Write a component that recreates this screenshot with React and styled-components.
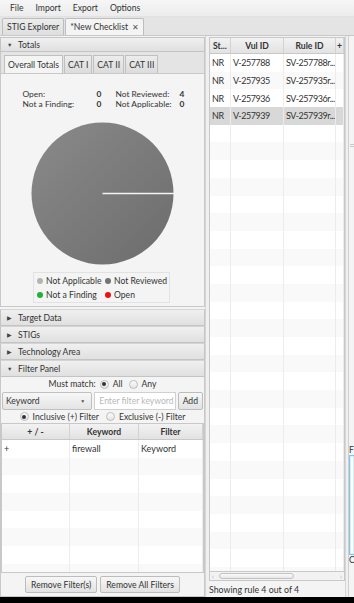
import React from 'react';
import styled, { createGlobalStyle } from 'styled-components';

const Global = createGlobalStyle`
  html, body { margin: 0; padding: 0; background: #000; }
  body {
    font-family: Lato, "Noto Sans", sans-serif;
    font-size: 8.4px;
    color: #333;
  }
  * { box-sizing: border-box; }
`;

const Window = styled.div`
  width: 354px;
  height: 597px;
  background: #f4f4f4;
  display: flex;
  flex-direction: column;
  overflow: hidden;
`;

const MenuBar = styled.div`
  height: 17px;
  display: flex;
  align-items: center;
  gap: 12px;
  padding-left: 10px;
  background: linear-gradient(#f6f6f6, #ececec);
  border-bottom: 1px solid #e2e2e2;
  font-size: 8.6px;
`;

const MenuItem = styled.span`
  color: #333;
`;

const TabBar = styled.div`
  height: 19px;
  display: flex;
  align-items: flex-end;
  padding-left: 2px;
  gap: 1px;
  background: #e4e4e4;
  border-bottom: 1px solid #c8c8c8;
`;

const DocTab = styled.div`
  height: 17px;
  padding: 0 4px;
  display: flex;
  align-items: center;
  gap: 4px;
  border: 1px solid #bdbdbd;
  border-bottom: none;
  border-radius: 2px 2px 0 0;
  background: ${p => (p.$active ? '#f4f4f4' : 'linear-gradient(#ececec, #dedede)')};
  font-size: 8.6px;
`;

const Close = styled.span`
  font-size: 7.5px;
  color: #555;
`;

const Body = styled.div`
  flex: 1;
  display: flex;
  min-height: 0;
`;

const LeftPane = styled.div`
  width: 205px;
  display: flex;
  flex-direction: column;
  padding-top: 1px;
`;

const Divider = styled.div`
  width: ${p => p.$w || 4}px;
  background: #f0f0f0;
  border-left: 1px solid #d6d6d6;
`;

const PaneHeader = styled.div`
  height: ${p => p.$h || 17}px;
  flex: none;
  display: flex;
  align-items: center;
  gap: 5px;
  padding-left: 6px;
  background: linear-gradient(#f0f0f0, #e0e0e0);
  border: 1px solid #c4c4c4;
  border-top-color: ${p => (p.$h ? '#c4c4c4' : '#d4d4d4')};
  color: #333;
  font-size: 8.6px;
`;

const Arrow = styled.span`
  font-size: 5.5px;
  color: #444;
  width: 6px;
`;

const TotalsBody = styled.div`
  height: 255px;
  flex: none;
  border: 1px solid #c8c8c8;
  border-top: none;
  display: flex;
  flex-direction: column;
  margin-bottom: 2px;
`;

const SubTabBar = styled.div`
  height: 22px;
  display: flex;
  align-items: flex-end;
  gap: 1px;
  padding-left: 3px;
  background: #e4e4e4;
  border-bottom: 1px solid #c8c8c8;
`;

const SubTab = styled.div`
  height: 18px;
  padding: 0 3px;
  display: flex;
  align-items: center;
  border: 1px solid #c0c0c0;
  border-bottom: none;
  background: ${p => (p.$active ? '#f4f4f4' : 'linear-gradient(#ececec, #dcdcdc)')};
  font-size: 8.6px;
`;

const TotalsContent = styled.div`
  flex: 1;
  display: flex;
  flex-direction: column;
  align-items: center;
  padding-top: 15px;
`;

const Stats = styled.div`
  display: grid;
  grid-template-columns: 74px 4px 15px 64px 3px;
  line-height: 10px;
  white-space: nowrap;
`;

const StatLabel = styled.span``;
const StatValue = styled.span`
  font-weight: bold;
  text-align: right;
`;

const Pie = styled.svg`
  margin-top: 13px;
  display: block;
`;

const Legend = styled.div`
  margin-top: 7px;
  margin-left: -2px;
  width: 137px;
  height: 31px;
  border: 1px solid #e2e2e2;
  display: grid;
  grid-template-columns: 68px 66px;
  align-content: center;
  row-gap: 4px;
  padding-left: 3px;
  font-size: 8.6px;
`;

const LegendItem = styled.div`
  display: flex;
  align-items: center;
  gap: 3px;
  white-space: nowrap;
  line-height: 10px;
`;

const Dot = styled.span`
  width: 6px;
  height: 6px;
  border-radius: 50%;
  background: ${p => p.$c};
  flex: none;
`;

const FilterBody = styled.div`
  flex: 1;
  display: flex;
  flex-direction: column;
  border: 1px solid #c8c8c8;
  border-top: none;
  min-height: 0;
  font-size: 8.6px;
`;

const RadioRow = styled.div`
  height: ${p => p.$h || 12}px;
  flex: none;
  display: flex;
  align-items: center;
  justify-content: center;
  gap: 4px;
  white-space: nowrap;
`;

const Radio = styled.span`
  width: 9px;
  height: 9px;
  border-radius: 50%;
  border: 1px solid #bcbcbc;
  background: linear-gradient(#fbfbfb, #e6e6e6);
  display: inline-flex;
  align-items: center;
  justify-content: center;
  margin-left: ${p => p.$gap || 0}px;
  &::after {
    content: '';
    width: 4px;
    height: 4px;
    border-radius: 50%;
    background: ${p => (p.$on ? '#333' : 'transparent')};
  }
`;

const InputRow = styled.div`
  height: 18px;
  flex: none;
  margin-top: 1px;
  display: flex;
  gap: 2px;
  padding: 0 1px;
`;

const Combo = styled.div`
  width: 91px;
  border: 1px solid #c0c0c0;
  border-radius: 2px;
  background: linear-gradient(#f7f7f7, #e4e4e4);
  display: flex;
  align-items: center;
  justify-content: space-between;
  padding: 0 6px 0 3px;
`;

const Caret = styled.span`
  font-size: 5px;
  color: #555;
`;

const TextInput = styled.div`
  width: 82px;
  border: 1px solid #d0d0d0;
  background: #fff;
  color: #b8b8b8;
  display: flex;
  align-items: center;
  padding-left: 4px;
  white-space: nowrap;
  overflow: hidden;
`;

const Button = styled.div`
  height: ${p => p.$h || 17}px;
  padding: 0 ${p => p.$px || 5}px;
  flex: ${p => (p.$grow ? 1 : 'none')};
  border: 1px solid #bcbcbc;
  border-radius: 2px;
  background: linear-gradient(#f7f7f7, #e2e2e2);
  display: flex;
  align-items: center;
  justify-content: center;
  white-space: nowrap;
  color: #333;
`;

const Table = styled.div`
  flex: 1;
  display: flex;
  flex-direction: column;
  overflow: hidden;
  background: #fff;
  border: 1px solid #c8c8c8;
  min-height: 0;
`;

const HeadRow = styled.div`
  height: 16px;
  flex: none;
  display: grid;
  grid-template-columns: ${p => p.$cols};
  background: linear-gradient(#f2f2f2, #e2e2e2);
  border-bottom: 1px solid #c8c8c8;
  font-weight: bold;
  color: #333;
  font-size: 8.6px;
`;

const HeadCell = styled.div`
  display: flex;
  align-items: center;
  justify-content: center;
  padding: 0 2px;
  border-right: 1px solid #d2d2d2;
  white-space: nowrap;
  overflow: hidden;
`;

const Row = styled.div`
  height: 17.7px;
  flex: none;
  display: grid;
  grid-template-columns: ${p => p.$cols};
  background: ${p => (p.$sel ? '#d8d8d8' : p.$odd ? '#f9f9f9' : '#fff')};
  font-size: ${p => p.$fs || 9}px;
  letter-spacing: ${p => p.$ls || 0}px;
  color: #333;
`;

const Cell = styled.div`
  display: flex;
  align-items: center;
  padding-left: 2px;
  border-right: 1px solid #ececec;
  white-space: nowrap;
  overflow: hidden;
`;

const ButtonBar = styled.div`
  height: 23px;
  flex: none;
  display: flex;
  align-items: center;
  justify-content: center;
  gap: 3px;
`;

const RightPane = styled.div`
  width: 136px;
  display: flex;
  flex-direction: column;
  padding-top: 1px;
`;

const HScroll = styled.div`
  height: 9px;
  flex: none;
  display: flex;
  align-items: center;
  gap: 2px;
  padding: 0 2px;
  background: #f2f2f2;
  border: 1px solid #c8c8c8;
  border-top: none;
  color: #aaa;
  font-size: 7px;
`;

const Thumb = styled.div`
  width: 75px;
  height: 6px;
  margin-left: 3px;
  border: 1px solid #c2c2c2;
  border-radius: 3px;
  background: linear-gradient(#fafafa, #e8e8e8);
`;

const Spacer = styled.div`
  flex: 1;
`;

const Status = styled.div`
  height: 16px;
  flex: none;
  display: flex;
  align-items: center;
  white-space: nowrap;
  font-size: 8.8px;
`;

const SidePane = styled.div`
  flex: 1;
  display: flex;
  flex-direction: column;
  overflow: hidden;
  position: relative;
  border-left: 1px solid #d0d0d0;
  padding-top: 409px;
`;

const Grip = styled.div`
  position: absolute;
  top: 108px;
  left: 1px;
  width: 4px;
  height: 3px;
  border-top: 1px solid #c8c8c8;
  border-bottom: 1px solid #c8c8c8;
`;

const SideLabel = styled.div`
  height: 10px;
  line-height: 10px;
  white-space: nowrap;
  font-size: 8.6px;
`;

const SideArea = styled.div`
  height: 100px;
  border: 1px solid #7ec7e8;
  border-right: none;
  background: #fff;
  box-shadow: inset 0 0 0 1px #d6eef8;
`;

const filterCols = '68px 69px 1fr';
const ruleCols = '21px 53px 52px 1fr';

const rules = [
  ['NR', 'V-257788', 'SV-257788r...'],
  ['NR', 'V-257935', 'SV-257935r...'],
  ['NR', 'V-257936', 'SV-257936r...'],
  ['NR', 'V-257939', 'SV-257939r...'],
];

function PieChart() {
  return (
    <Pie width="143" height="143" viewBox="0 0 143 143">
      <defs>
        <linearGradient id="pg" x1="0" y1="0" x2="1" y2="1">
          <stop offset="0" stopColor="#8a8a8a" />
          <stop offset="1" stopColor="#6c6c6c" />
        </linearGradient>
      </defs>
      <circle cx="71.5" cy="71.5" r="71" fill="url(#pg)" />
      <line x1="71.5" y1="71.5" x2="143" y2="71.5" stroke="#f4f4f4" strokeWidth="1.5" />
    </Pie>
  );
}

export default function App() {
  const ruleRows = Array.from({ length: 30 }, (_, i) => rules[i] || ['', '', '']);
  const filterRows = Array.from({ length: 8 }, (_, i) => (i === 0 ? ['+', 'firewall', 'Keyword'] : ['', '', '']));

  return (
    <>
      <Global />
      <Window>
        <MenuBar>
          <MenuItem>File</MenuItem>
          <MenuItem>Import</MenuItem>
          <MenuItem>Export</MenuItem>
          <MenuItem>Options</MenuItem>
        </MenuBar>
        <TabBar>
          <DocTab>STIG Explorer</DocTab>
          <DocTab $active>*New Checklist <Close>✕</Close></DocTab>
        </TabBar>
        <Body>
          <LeftPane>
            <PaneHeader $h={15}><Arrow>▼</Arrow>Totals</PaneHeader>
            <TotalsBody>
              <SubTabBar>
                <SubTab $active>Overall Totals</SubTab>
                <SubTab>CAT I</SubTab>
                <SubTab>CAT II</SubTab>
                <SubTab>CAT III</SubTab>
              </SubTabBar>
              <TotalsContent>
                <Stats>
                  <StatLabel>Open:</StatLabel><StatValue>0</StatValue><span />
                  <StatLabel>Not Reviewed:</StatLabel><StatValue>4</StatValue>
                  <StatLabel>Not a Finding:</StatLabel><StatValue>0</StatValue><span />
                  <StatLabel>Not Applicable:</StatLabel><StatValue>0</StatValue>
                </Stats>
                <PieChart />
                <Legend>
                  <LegendItem><Dot $c="#b4b4b4" />Not Applicable</LegendItem>
                  <LegendItem><Dot $c="#737373" />Not Reviewed</LegendItem>
                  <LegendItem><Dot $c="#1fb33a" />Not a Finding</LegendItem>
                  <LegendItem><Dot $c="#ee1111" />Open</LegendItem>
                </Legend>
              </TotalsContent>
            </TotalsBody>
            <PaneHeader><Arrow>▶</Arrow>Target Data</PaneHeader>
            <PaneHeader><Arrow>▶</Arrow>STIGs</PaneHeader>
            <PaneHeader><Arrow>▶</Arrow>Technology Area</PaneHeader>
            <PaneHeader><Arrow>▼</Arrow>Filter Panel</PaneHeader>
            <FilterBody>
              <RadioRow $h={14}>
                Must match:<Radio $on />All<Radio $gap={2} />Any
              </RadioRow>
              <InputRow>
                <Combo>Keyword<Caret>▼</Caret></Combo>
                <TextInput>Enter filter keyword</TextInput>
                <Button $h={18} $px={4} $grow>Add</Button>
              </InputRow>
              <RadioRow $h={13}>
                <Radio $on />Inclusive (+) Filter<Radio $gap={3} />Exclusive (-) Filter
              </RadioRow>
              <Table>
                <HeadRow $cols={filterCols}>
                  <HeadCell>+ / -</HeadCell>
                  <HeadCell>Keyword</HeadCell>
                  <HeadCell>Filter</HeadCell>
                </HeadRow>
                {filterRows.map((r, i) => (
                  <Row key={i} $cols={filterCols} $odd={i % 2 === 1}>
                    <Cell>{r[0]}</Cell>
                    <Cell>{r[1]}</Cell>
                    <Cell>{r[2]}</Cell>
                  </Row>
                ))}
              </Table>
              <ButtonBar>
                <Button>Remove Filter(s)</Button>
                <Button>Remove All Filters</Button>
              </ButtonBar>
            </FilterBody>
          </LeftPane>
          <Divider />
          <RightPane>
            <Table>
              <HeadRow $cols={ruleCols}>
                <HeadCell>St...</HeadCell>
                <HeadCell>Vul ID</HeadCell>
                <HeadCell>Rule ID</HeadCell>
                <HeadCell>+</HeadCell>
              </HeadRow>
              {ruleRows.map((r, i) => (
                <Row key={i} $cols={ruleCols} $odd={i % 2 === 1} $sel={i === 3} $fs={9} $ls={-0.45}>
                  <Cell>{r[0]}</Cell>
                  <Cell>{r[1]}</Cell>
                  <Cell>{r[2]}</Cell>
                  <Cell />
                </Row>
              ))}
            </Table>
            <HScroll>‹<Thumb /><Spacer />›</HScroll>
            <Status>Showing rule 4 out of 4</Status>
          </RightPane>
          <Divider $w={3} />
          <SidePane>
            <Grip />
            <SideLabel>F</SideLabel>
            <SideArea />
            <SideLabel>C</SideLabel>
          </SidePane>
        </Body>
      </Window>
    </>
  );
}
